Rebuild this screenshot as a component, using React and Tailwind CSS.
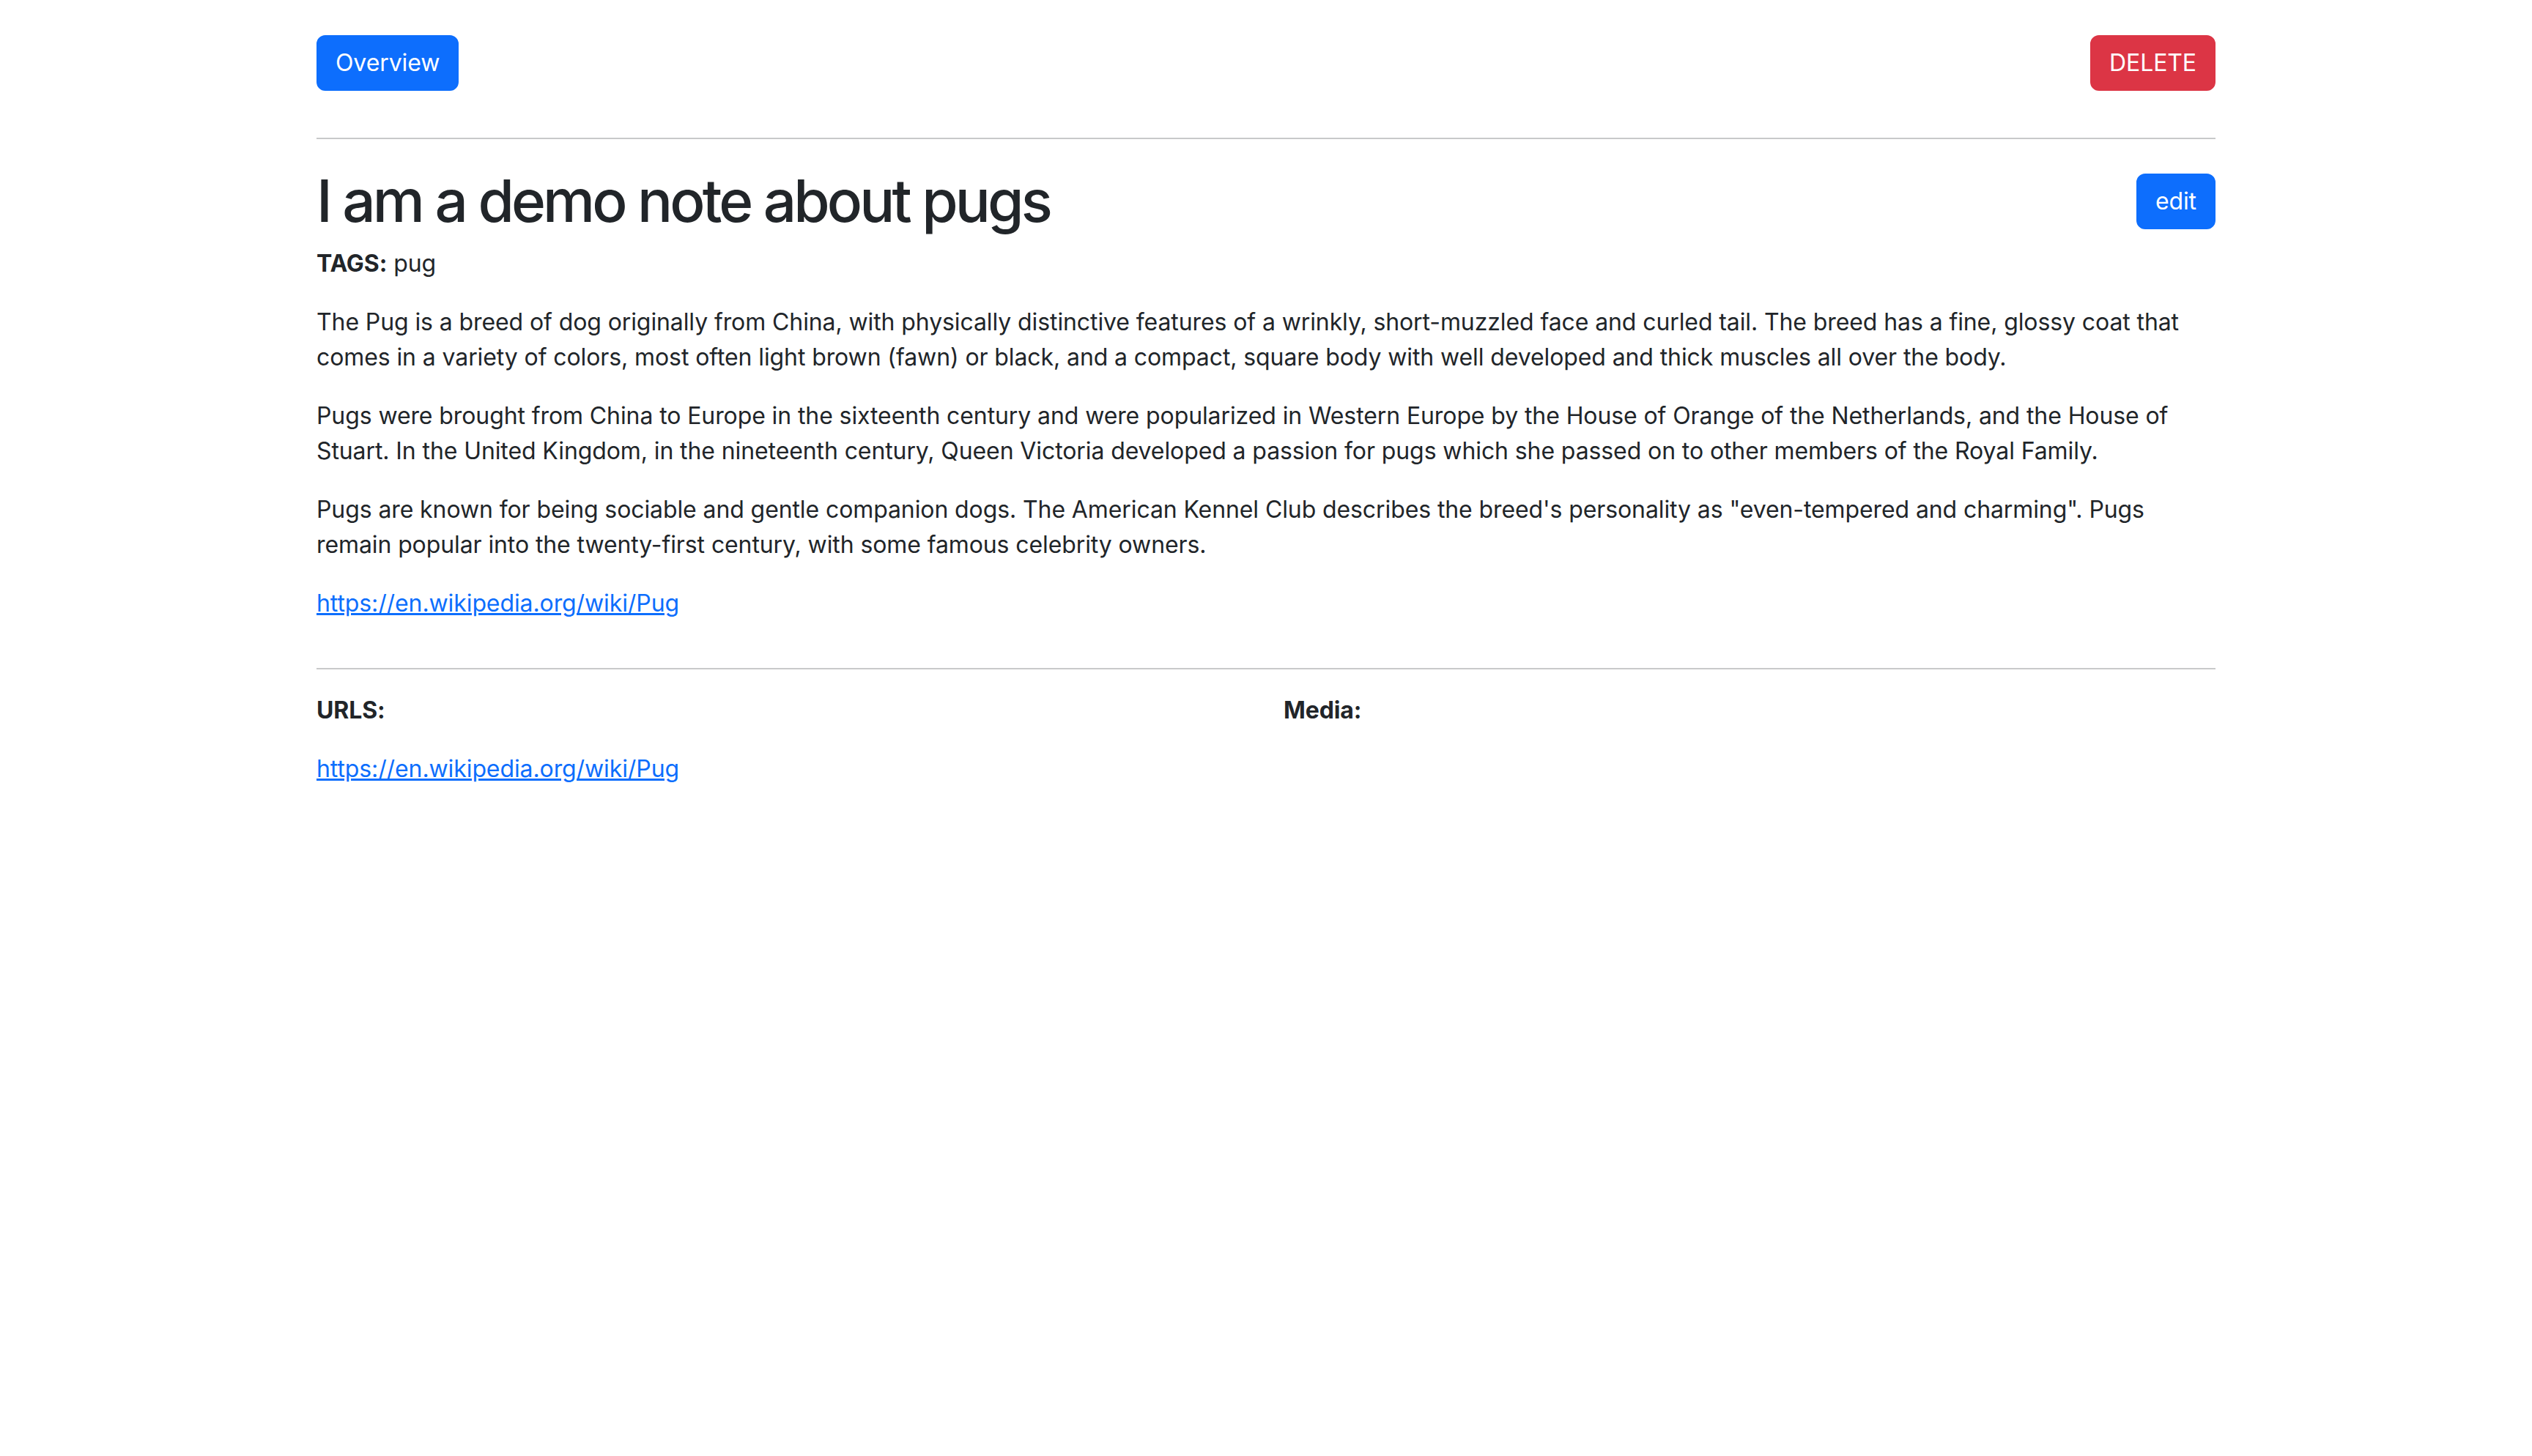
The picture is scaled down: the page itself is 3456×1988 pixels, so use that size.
import React from 'react'

const paragraphs = [
  'The Pug is a breed of dog originally from China, with physically distinctive features of a wrinkly, short-muzzled face and curled tail. The breed has a fine, glossy coat that comes in a variety of colors, most often light brown (fawn) or black, and a compact, square body with well developed and thick muscles all over the body.',
  'Pugs were brought from China to Europe in the sixteenth century and were popularized in Western Europe by the House of Orange of the Netherlands, and the House of Stuart. In the United Kingdom, in the nineteenth century, Queen Victoria developed a passion for pugs which she passed on to other members of the Royal Family.',
  'Pugs are known for being sociable and gentle companion dogs. The American Kennel Club describes the breed\'s personality as "even-tempered and charming". Pugs remain popular into the twenty-first century, with some famous celebrity owners.',
]

const btn = 'px-[24px] py-[12px] text-[32px] leading-[48px] rounded-[12px] text-white border-2'

export default function App() {
  return (
    <div className="min-h-screen bg-white text-[#212529] font-[Inter,sans-serif] text-[32px] leading-[48px] tracking-[-0.1px]">
      <div className="max-w-[2640px] mx-auto px-[24px] pt-[48px]">
        {/* top actions */}
        <div className="flex items-center justify-between">
          <button className={`${btn} bg-[#0d6efd] border-[#0d6efd]`}>Overview</button>
          <button className={`${btn} bg-[#dc3545] border-[#dc3545]`}>DELETE</button>
        </div>

        <hr className="mt-[64px] mb-[36px] border-0 border-t-2 border-[#c8c9ca]" />

        {/* title */}
        <div className="flex items-center justify-between">
          <h1 className="text-[80px] leading-[96px] font-medium tracking-[-3.9px]">I am a demo note about pugs</h1>
          <button className={`${btn} bg-[#0d6efd] border-[#0d6efd] mt-[2px]`}>edit</button>
        </div>

        <p className="mt-[14px] mb-[32px]">
          <strong className="font-bold">TAGS:</strong> pug
        </p>

        {paragraphs.map((p, i) => (
          <p key={i} className="mb-[32px]">{p}</p>
        ))}

        <p>
          <a href="#" className="text-[#0d6efd] underline">https://en.wikipedia.org/wiki/Pug</a>
        </p>

        <hr className="mt-[64px] mb-[32px] border-0 border-t-2 border-[#c8c9ca]" />

        <div className="grid grid-cols-2 gap-x-[48px]">
          <div>
            <p className="mb-[32px] font-bold">URLS:</p>
            <p className="mb-[32px]">
              <a href="#" className="text-[#0d6efd] underline">https://en.wikipedia.org/wiki/Pug</a>
            </p>
          </div>
          <div>
            <p className="mb-[32px] font-bold">Media:</p>
          </div>
        </div>
      </div>
    </div>
  )
}
